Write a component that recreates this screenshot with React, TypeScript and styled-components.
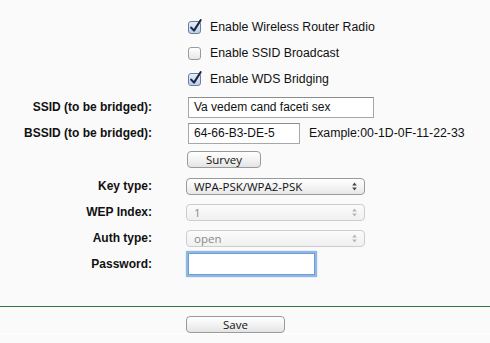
import styled, { createGlobalStyle } from "styled-components";

const Global = createGlobalStyle`
  html, body {
    margin: 0;
    padding: 0;
    background: #fafafa;
  }
  body {
    font-family: "Liberation Sans", Arial, sans-serif;
    font-size: 13px;
    color: #111;
  }
`;

// start of styled-components
const Page = styled.div`
  width: 490px;
  height: 343px;
  overflow: hidden;
  background: #fafafa;
`;
const Form = styled.div`
  display: grid;
  grid-template-columns: 152px 1fr;
  column-gap: 34px;
  padding-top: 14px;
`;
interface RowProps {
  $h?: number;
  $top?: number;
}
const Label = styled.div<RowProps>`
  height: ${(p) => p.$h ?? 26}px;
  margin-top: ${(p) => p.$top ?? 0}px;
  display: flex;
  align-items: center;
  justify-content: flex-end;
  font-weight: 700;
  font-size: 12px;
`;
const Field = styled.div<RowProps>`
  height: ${(p) => p.$h ?? 26}px;
  margin-top: ${(p) => p.$top ?? 0}px;
  display: flex;
  align-items: center;
`;
const CheckRow = styled(Field)`
  grid-column: 2;
  padding-left: 2px;
  gap: 9px;
`;
const Box = styled.span<{ $checked: boolean }>`
  width: 11px;
  height: 11px;
  border-radius: 3px;
  border: 1px solid ${(p) => (p.$checked ? "#6d7f99" : "#9a9a9a")};
  background: ${(p) =>
    p.$checked
      ? "linear-gradient(#e4eefb, #b9cfee)"
      : "linear-gradient(#ffffff, #e6e6e6)"};
  position: relative;
  flex: none;
  svg {
    position: absolute;
    left: 0px;
    top: -3px;
  }
`;
const CheckText = styled.span`
  font-size: 12.3px;
  color: #111;
`;
const TextBox = styled.div<{ $w: number; $focus?: boolean }>`
  box-sizing: border-box;
  width: ${(p) => p.$w}px;
  height: ${(p) => (p.$focus ? 22 : 21)}px;
  margin-left: 2px;
  background: #fff;
  border: 1px solid ${(p) => (p.$focus ? "#6f9bd6" : "#a7a7a7")};
  border-top-color: ${(p) => (p.$focus ? "#6f9bd6" : "#8d8d8d")};
  box-shadow: ${(p) =>
    p.$focus ? "0 0 1px 2px rgba(110, 160, 220, 0.75)" : "none"};
  font-family: "Liberation Sans", Arial, sans-serif;
  font-size: 12px;
  padding-left: 5px;
  display: flex;
  align-items: center;
  color: #111;
`;
const Hint = styled.span`
  margin-left: 9px;
  font-size: 12.3px;
  color: #111;
`;
const MacButton = styled.button<{ $w: number }>`
  box-sizing: border-box;
  width: ${(p) => p.$w}px;
  height: 17px;
  margin-left: 1px;
  padding: 0;
  border: 1px solid #9a9a9a;
  border-radius: 4px;
  background: linear-gradient(#ffffff 0%, #f3f3f3 50%, #e4e4e4 100%);
  font-family: "Open Sans", "DejaVu Sans", sans-serif;
  font-size: 11.5px;
  color: #111;
  line-height: 15px;
`;
const Select = styled.div<{ $disabled?: boolean }>`
  box-sizing: border-box;
  width: 179px;
  height: 17px;
  border: 1px solid ${(p) => (p.$disabled ? "#cdcdcd" : "#9a9a9a")};
  border-radius: 4px;
  background: ${(p) =>
    p.$disabled
      ? "linear-gradient(#fbfbfb, #f0f0f0)"
      : "linear-gradient(#ffffff 0%, #f2f2f2 60%, #e6e6e6 100%)"};
  font-family: "Open Sans", "DejaVu Sans", sans-serif;
  font-size: 11.5px;
  color: ${(p) => (p.$disabled ? "#8a8a8a" : "#111")};
  display: flex;
  align-items: center;
  justify-content: space-between;
  padding: 0 7px 0 7px;
`;
const Arrows = styled.svg<{ $disabled?: boolean }>`
  fill: ${(p) => (p.$disabled ? "#b5b5b5" : "#444")};
`;
const Footer = styled.div`
  margin-top: 29px;
  border-top: 1px solid #2f7a3b;
  box-shadow: 0 1px 0 #ffffff;
  display: flex;
  justify-content: center;
  padding-top: 9px;
  padding-right: 20px;
`;
// end of styled components

function Checkbox({ checked }: { checked: boolean }) {
  return (
    <Box $checked={checked}>
      {checked && (
        <svg width="13" height="14" viewBox="0 0 13 14">
          <path
            d="M2.2 8.6 L5 11.6 L11.6 1.2"
            fill="none"
            stroke="#1d2740"
            strokeWidth="2.1"
            strokeLinecap="round"
            strokeLinejoin="round"
          />
        </svg>
      )}
    </Box>
  );
}

function Dropdown({ value, disabled }: { value: string; disabled?: boolean }) {
  return (
    <Select $disabled={disabled}>
      <span>{value}</span>
      <Arrows $disabled={disabled} width="5" height="9" viewBox="0 0 5 9">
        <path d="M2.5 0.5 L4.8 3.5 L0.2 3.5 Z M0.2 5.5 L4.8 5.5 L2.5 8.5 Z" />
      </Arrows>
    </Select>
  );
}

const checks = [
  { label: "Enable Wireless Router Radio", checked: true },
  { label: "Enable SSID Broadcast", checked: false },
  { label: "Enable WDS Bridging", checked: true },
];

export default function App() {
  return (
    <Page>
      <Global />
      <Form>
        {checks.map((c) => (
          <CheckRow key={c.label}>
            <Checkbox checked={c.checked} />
            <CheckText>{c.label}</CheckText>
          </CheckRow>
        ))}

        <Label $top={2}>SSID (to be bridged):</Label>
        <Field $top={2}>
          <TextBox $w={186}>Va vedem cand faceti sex</TextBox>
        </Field>

        <Label>BSSID (to be bridged):</Label>
        <Field>
          <TextBox $w={112}>64-66-B3-DE-5</TextBox>
          <Hint>Example:00-1D-0F-11-22-33</Hint>
        </Field>

        <Label />
        <Field $h={27}>
          <MacButton $w={74}>Survey</MacButton>
        </Field>

        <Label>Key type:</Label>
        <Field>
          <Dropdown value="WPA-PSK/WPA2-PSK" />
        </Field>

        <Label>WEP Index:</Label>
        <Field>
          <Dropdown value="1" disabled />
        </Field>

        <Label>Auth type:</Label>
        <Field>
          <Dropdown value="open" disabled />
        </Field>

        <Label>Password:</Label>
        <Field>
          <TextBox $w={127} $focus />
        </Field>
      </Form>
      <Footer>
        <MacButton $w={99}>Save</MacButton>
      </Footer>
    </Page>
  );
}
